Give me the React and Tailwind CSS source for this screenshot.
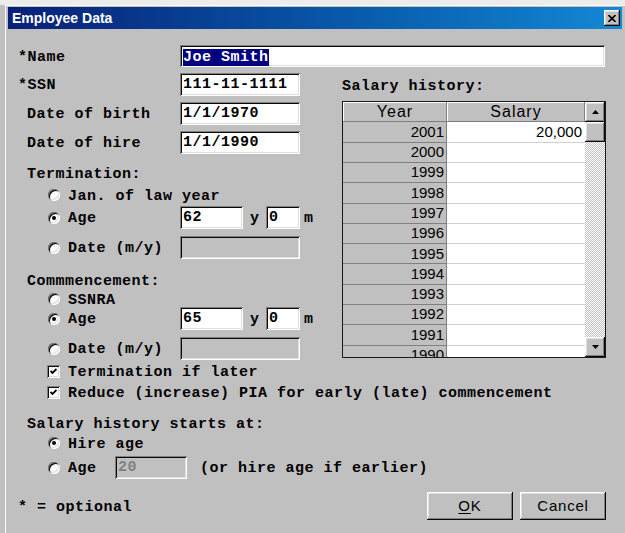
import React from 'react'

const mono = "font-['Liberation_Mono',monospace] font-bold text-[15px] tracking-[0.5px] text-black"
const sans = "font-['Liberation_Sans',Arial,sans-serif] font-normal"
const sunken = 'shadow-[inset_1px_1px_#808080,inset_-1px_-1px_#ffffff,inset_2px_2px_#0a0a0a,inset_-2px_-2px_#dfdfdf]'
const raised = 'shadow-[inset_-1px_-1px_#0a0a0a,inset_1px_1px_#ffffff,inset_-2px_-2px_#808080,inset_2px_2px_#dfdfdf]'
// label text sits a touch low in its row, like the bitmap font it stands in for
const label = 'pt-[4px]'

const YEARS = [2001, 2000, 1999, 1998, 1997, 1996, 1995, 1994, 1993, 1992, 1991, 1990]

function Field({ className = '', value, disabled, selected }) {
  return (
    <div
      className={
        'flex items-center pt-[2px] pl-[3px] ' +
        sunken +
        ' ' +
        (disabled ? 'bg-[#c0c0c0] text-[#808080] ' : 'bg-white ') +
        className
      }
    >
      {selected ? (
        <span className="bg-[#000080] leading-[17px] text-white">{value}</span>
      ) : (
        <span className={disabled ? 'text-[#808080]' : ''}>{value}</span>
      )}
    </div>
  )
}

function Radio({ checked }) {
  return (
    <span
      className={
        'flex h-[12px] w-[12px] shrink-0 items-center justify-center rounded-full bg-white ' + sunken
      }
    >
      {checked && <span className="h-[4px] w-[4px] rounded-full bg-black" />}
    </span>
  )
}

function Check() {
  return (
    <span className={'flex h-[13px] w-[13px] shrink-0 items-center justify-center bg-white ' + sunken}>
      <svg width="7" height="7" viewBox="0 0 7 7">
        <path d="M0.5 3 L2.5 5 L6.5 1" stroke="#000" strokeWidth="1.8" fill="none" />
      </svg>
    </span>
  )
}

function Arrow({ down }) {
  return (
    <div className={'flex h-[20px] w-full shrink-0 items-center justify-center bg-[#c0c0c0] ' + raised}>
      <svg width="7" height="4" viewBox="0 0 7 4">
        <path d={down ? 'M0 0 H7 L3.5 4 Z' : 'M0 4 H7 L3.5 0 Z'} fill="#000" />
      </svg>
    </div>
  )
}

function SalaryTable() {
  return (
    <div className="mt-[5px] flex h-[257px] w-[264px] border border-[#1a1a1a] bg-[#c0c0c0]">
      <div className="flex-1 overflow-hidden">
        <div className={'flex h-[20.4px] text-[16px] tracking-[1px] text-black ' + sans}>
          <div className="flex w-[104px] items-center justify-center shadow-[inset_-1px_-1px_#808080,inset_1px_1px_#ffffff]">
            Year
          </div>
          <div className="flex flex-1 items-center justify-center shadow-[inset_-1px_-1px_#808080,inset_1px_1px_#ffffff]">
            Salary
          </div>
        </div>
        {YEARS.map((y) => (
          <div key={y} className={'flex h-[20.3px] text-[15px] tracking-normal text-black ' + sans}>
            <div className="flex w-[104px] items-center justify-end border-r border-b border-[#808080] bg-[#c0c0c0] pr-[2px]">
              {y}
            </div>
            <div className="flex flex-1 items-center justify-end border-b border-[#d0d0d0] bg-white pr-[3px]">
              {y === 2001 ? '20,000' : ''}
            </div>
          </div>
        ))}
      </div>
      <div className="flex w-[20px] flex-col">
        <Arrow />
        <div className={'h-[20px] shrink-0 bg-[#c0c0c0] ' + raised} />
        <div className="flex-1 [background-image:repeating-conic-gradient(#ffffff_0%_25%,#c0c0c0_0%_50%)] [background-size:2px_2px]" />
        <Arrow down />
      </div>
    </div>
  )
}

function Button({ children }) {
  return (
    <button
      type="button"
      className={
        'flex h-[28px] w-[86px] items-center justify-center bg-[#c0c0c0] text-[15px] tracking-[0.8px] text-black ' +
        raised +
        ' ' +
        sans
      }
    >
      {children}
    </button>
  )
}

export default function App() {
  return (
    <div className={'h-[533px] w-[625px] overflow-hidden bg-[#c0c0c0] ' + mono}>
      <div className="h-[5px] bg-[#ececec]" />
      <div className="ml-[5px] h-[528px] border-t border-l border-white pt-[1px] pl-[2px]">
        {/* title bar */}
        <div className="flex h-[22px] w-[614px] items-center justify-between bg-gradient-to-r from-[#0a1f78] to-[#1488d4] pr-[2px] pl-[4px]">
          <span className="font-['Liberation_Sans',Arial,sans-serif] text-[14px] font-bold tracking-normal text-white">
            Employee Data
          </span>
          <div className={'flex h-[16px] w-[16px] items-center justify-center bg-[#c0c0c0] ' + raised}>
            <svg width="8" height="7" viewBox="0 0 8 7">
              <path d="M0.5 0 L7.5 7 M7.5 0 L0.5 7" stroke="#000" strokeWidth="1.6" />
            </svg>
          </div>
        </div>

        <div className="w-[598px] pl-[10px]">
          <div className="mt-[16px] flex h-[22px] items-center">
            <span className={'w-[162px] ' + label}>*Name</span>
            <Field className="h-[22px] w-[425px]" value="Joe Smith" selected />
          </div>

          <div className="mt-[6px] flex">
            <div className="w-[324px]">
              <div className="flex h-[23px] items-center">
                <span className={'w-[162px] ' + label}>*SSN</span>
                <Field className="h-[23px] w-[120px]" value="111-11-1111" />
              </div>
              <div className="mt-[6px] flex h-[23px] items-center">
                <span className={'w-[162px] pl-[9px] ' + label}>Date of birth</span>
                <Field className="h-[23px] w-[120px]" value="1/1/1970" />
              </div>
              <div className="mt-[6px] flex h-[23px] items-center">
                <span className={'w-[162px] pl-[9px] ' + label}>Date of hire</span>
                <Field className="h-[23px] w-[120px]" value="1/1/1990" />
              </div>

              <div className={'mt-[10px] flex h-[18px] items-center pl-[9px] ' + label}>Termination:</div>
              <div className="mt-[4px] flex h-[18px] items-center pl-[30px]">
                <Radio />
                <span className={'ml-[8px] ' + label}>Jan. of law year</span>
              </div>
              <div className="mt-[2px] flex h-[23px] items-center pl-[30px]">
                <Radio checked />
                <span className={'ml-[8px] w-[112px] ' + label}>Age</span>
                <Field className="h-[23px] w-[63px]" value="62" />
                <span className={'w-[23px] pl-[7px] ' + label}>y</span>
                <Field className="h-[23px] w-[34px]" value="0" />
                <span className={'pl-[4px] ' + label}>m</span>
              </div>
              <div className="mt-[7px] flex h-[23px] items-center pl-[30px]">
                <Radio />
                <span className={'ml-[8px] w-[112px] ' + label}>Date (m/y)</span>
                <Field className="h-[23px] w-[120px]" value="" disabled />
              </div>

              <div className={'mt-[12px] flex h-[18px] items-center pl-[9px] ' + label}>Commmencement:</div>
              <div className="mt-[2px] flex h-[16px] items-center pl-[30px]">
                <Radio />
                <span className={'ml-[8px] ' + label}>SSNRA</span>
              </div>
              <div className="flex h-[23px] items-center pl-[30px]">
                <Radio checked />
                <span className={'ml-[8px] w-[112px] ' + label}>Age</span>
                <Field className="h-[23px] w-[63px]" value="65" />
                <span className={'w-[23px] pl-[7px] ' + label}>y</span>
                <Field className="h-[23px] w-[34px]" value="0" />
                <span className={'pl-[4px] ' + label}>m</span>
              </div>
              <div className="mt-[7px] flex h-[23px] items-center pl-[30px]">
                <Radio />
                <span className={'ml-[8px] w-[112px] ' + label}>Date (m/y)</span>
                <Field className="h-[23px] w-[120px]" value="" disabled />
              </div>
            </div>

            <div className="w-[264px]">
              <div className="flex h-[23px] items-center pt-[5px]">Salary history:</div>
              <SalaryTable />
            </div>
          </div>

          <div className="mt-[2px] flex h-[18px] items-center pl-[29px]">
            <Check />
            <span className={'ml-[8px] ' + label}>Termination if later</span>
          </div>
          <div className="mt-[3px] flex h-[18px] items-center pl-[29px]">
            <Check />
            <span className={'ml-[8px] ' + label}>Reduce (increase) PIA for early (late) commencement</span>
          </div>

          <div className={'mt-[13px] flex h-[18px] items-center pl-[9px] ' + label}>Salary history starts at:</div>
          <div className="mt-[2px] flex h-[18px] items-center pl-[30px]">
            <Radio checked />
            <span className={'ml-[8px] ' + label}>Hire age</span>
          </div>
          <div className="mt-[4px] flex h-[23px] items-center pl-[30px]">
            <Radio />
            <span className={'ml-[8px] w-[47px] ' + label}>Age</span>
            <Field className="h-[23px] w-[72px]" value="20" disabled />
            <span className={'ml-[13px] ' + label}>(or hire age if earlier)</span>
          </div>

          <div className="mt-[13px] flex h-[28px] w-[588px] items-center">
            <span className={label}>* = optional</span>
            <div className="ml-auto flex gap-[7px]">
              <Button>
                <span className="underline underline-offset-2">O</span>K
              </Button>
              <Button>Cancel</Button>
            </div>
          </div>
        </div>
      </div>
    </div>
  )
}
